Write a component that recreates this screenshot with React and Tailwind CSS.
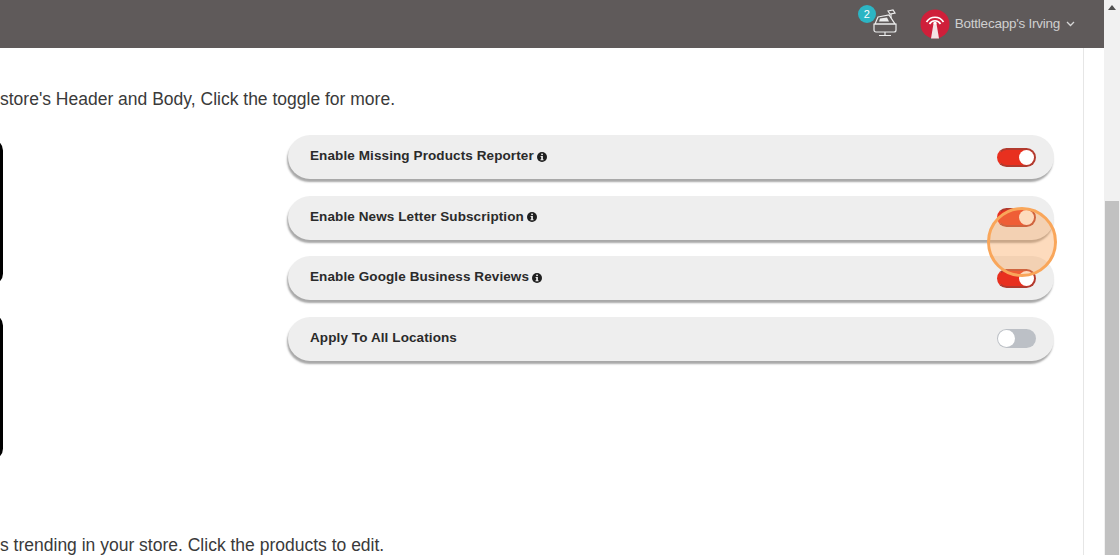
import React from "react";

const rows = [
  { label: "Enable Missing Products Reporter", info: true, on: true },
  { label: "Enable News Letter Subscription", info: true, on: true },
  { label: "Enable Google Business Reviews", info: true, on: true },
  { label: "Apply To All Locations", info: false, on: false },
];

const InfoIcon = () => (
  <svg width="10" height="10" viewBox="0 0 10 10" className="ml-[3px] mt-[1px] shrink-0">
    <circle cx="5" cy="5" r="5" fill="#1f1f1f" />
    <rect x="4.2" y="1.6" width="1.7" height="1.5" fill="#eee" />
    <path d="M3.6 4h2.3v3.3h.6v.9H3.5v-.9h.7V4.9h-.6z" fill="#eee" />
  </svg>
);

const Toggle = ({ on }) => (
  <div
    className={`flex h-[19px] w-[39px] items-center rounded-full ${
      on ? "justify-end border-2 border-[#b23a2e] border-l-[#e8301f] bg-[#e8301f]" : "justify-start bg-[#bcc0c6] p-[1px]"
    }`}
  >
    <div className={`rounded-full bg-white ${on ? "h-[15px] w-[15px]" : "h-[17px] w-[17px]"}`} />
  </div>
);

const Row = ({ label, info, on }) => (
  <div className="flex h-[44px] items-center justify-between rounded-[22px] bg-[#eeeeee] pl-[22px] pr-[18px] shadow-[-1px_3px_2px_0_#a8a8a8]">
    <div className="mb-[2px] flex items-center text-[13.5px] font-bold leading-none tracking-[0.1px] text-[#2a2a2a] [font-family:'Liberation_Sans',sans-serif]">
      {label}
      {info && <InfoIcon />}
    </div>
    <Toggle on={on} />
  </div>
);

const RegisterIcon = () => (
  <svg width="28" height="28" viewBox="0 0 28 28" fill="none" stroke="#ececec" strokeWidth="1.2">
    <path d="M7 8l11-2 6 9H4z" />
    <path d="M9 9.5l7-1 2 4H8z" fill="#ececec" stroke="none" />
    <path d="M17 2l5-1 2 3-5 1z" />
    <path d="M20 5v4" />
    <path d="M3 15h22v6a2 2 0 0 1-2 2H5a2 2 0 0 1-2-2z" />
    <path d="M14 23v3M8 26.5h12" />
  </svg>
);

const Logo = () => (
  <svg width="30" height="30" viewBox="0 0 30 30" fill="none">
    <circle cx="15" cy="15" r="14.5" fill="#cf1f3a" />
    <path d="M13.6 14h2.8l2.6 15.5H11z" fill="#f3e3e5" />
    <path d="M6.5 13a10 10 0 0 1 17 0M9.5 15a6.3 6.3 0 0 1 11 0" stroke="#fff" strokeWidth="1.7" />
    <circle cx="15" cy="14" r="1.6" fill="#fff" />
  </svg>
);

const App = () => {
  return (
    <div className="relative flex h-[555px] w-[1120px] overflow-hidden bg-white text-[#333] [font-family:'Liberation_Sans',sans-serif]">
      <div className="flex w-[1104px] flex-col">
        {/* Top bar */}
        <div className="flex h-[48px] shrink-0 items-center justify-end bg-[#5f5a5a] pr-[29px]">
          <div className="relative mr-[21px] mt-[-2px]">
            <RegisterIcon />
            <div className="absolute left-[-13px] top-[-4px] flex h-[18px] w-[18px] items-center justify-center rounded-full bg-[#2cb5c4] text-[11px] text-white">
              2
            </div>
          </div>
          <Logo />
          <span className="ml-[5px] text-[13.5px] tracking-[-0.25px] text-[#cfcfcf]">Bottlecapp's Irving</span>
          <svg width="9" height="6" viewBox="0 0 9 6" fill="none" stroke="#d6d6d6" strokeWidth="1.3" className="ml-[6px]">
            <path d="M1 1l3.5 3.5L8 1" />
          </svg>
        </div>

        {/* Content */}
        <div className="mr-[20px] flex min-h-0 flex-1 flex-col border-r border-[#e6e6e6]">
          <p className="mt-[41px] h-[20px] whitespace-nowrap text-[17.5px] leading-[20px] text-[#3a3a3a]">
            store's Header and Body, Click the toggle for more.
          </p>
          <div className="mt-[26px] flex h-[395px]">
            <div className="flex w-[288px] flex-col gap-[29px] pt-[4px]">
              <div className="ml-[-20px] h-[146px] w-[23px] rounded-[14px] bg-black" />
              <div className="ml-[-20px] h-[146px] w-[23px] rounded-[14px] bg-black" />
            </div>
            <div className="flex w-[766px] flex-col gap-[16.5px]">
              {rows.map((r) => (
                <Row key={r.label} {...r} />
              ))}
            </div>
          </div>
          <p className="mt-[7px] whitespace-nowrap text-[17.5px] leading-[20px] text-[#3a3a3a]">
            s trending in your store. Click the products to edit.
          </p>
        </div>
      </div>

      {/* Scrollbar */}
      <div className="flex w-[16px] flex-col items-center bg-[#f1f1f1]">
        <div className="mt-[5px] h-0 w-0 border-x-[4px] border-b-[5px] border-x-transparent border-b-[#505050]" />
        <div className="mt-[191px] w-[14px] flex-1 bg-[#c1c1c1]" />
      </div>

      {/* Click highlight */}
      <div className="absolute left-[987px] top-[207px] h-[70px] w-[70px] rounded-full border-[3px] border-[#f9a65a] bg-[#f9a65a]/40" />
    </div>
  );
};

export default App;
